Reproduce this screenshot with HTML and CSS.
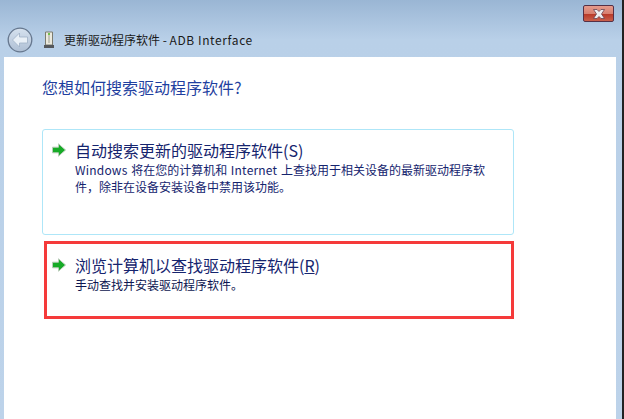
FILE: index.html
```html
<!DOCTYPE html>
<html lang="zh-CN">
<head>
    <meta charset="UTF-8">
    <title>更新驱动程序软件</title>
    <link rel="stylesheet" href="styles.css">
</head>
<body>
    <div class="window">
        <div class="caption">
            <div class="close-btn">
                <svg width="16" height="10" viewBox="0 0 16 10">
                    <path d="M2.5 .5 L6 .5 L8 2.5 L10 .5 L13.5 .5 L10.5 5 L13.5 9.5 L10 9.5 L8 7.5 L6 9.5 L2.5 9.5 L5.5 5 Z" fill="#eeeef0" stroke="#6a4450" stroke-width="0.8"/>
                </svg>
            </div>
        </div>
        <div class="nav">
            <div class="back-btn">
                <svg width="26" height="26" viewBox="0 0 26 26">
                    <defs>
                        <linearGradient id="back-fill" x1="0" y1="0" x2="0" y2="1">
                            <stop offset="0" stop-color="#d6e2ef"/>
                            <stop offset="1" stop-color="#aebfd4"/>
                        </linearGradient>
                    </defs>
                    <circle cx="13" cy="13" r="11.8" fill="url(#back-fill)" stroke="#66778e" stroke-width="1.3"/>
                    <path d="M12.5 6 L5.5 13 L12.5 20 L12.5 16 L20.5 16 L20.5 10 L12.5 10 Z" fill="#e9f0f7" stroke="#9fb1c6" stroke-width="0.8"/>
                </svg>
            </div>
            <svg class="device-icon" width="12" height="18" viewBox="0 0 12 18">
                <path d="M2.5 1 L9.5 1 L9.5 14 L2.5 14 Z" fill="#eceade" stroke="#7c7c70"/>
                <rect x="5" y="2" width="2" height="10" fill="#c4c4b8"/>
                <rect x="5" y="2" width="2" height="2" fill="#6fc04a"/>
                <rect x="1" y="14" width="10" height="3" fill="#55585c"/>
            </svg>
            <span class="nav-title">更新驱动程序软件 - <span class="latin">ADB Interface</span></span>
        </div>
        <main class="content">
            <h1 class="question">您想如何搜索驱动程序软件?</h1>
            <div class="choices">
                <div class="choice choice-hover">
                    <svg class="arrow" width="16" height="14" viewBox="0 0 16 14">
                        <path d="M1.5 4.2 L7.5 4.2 L7.5 .8 L14.5 7 L7.5 13.2 L7.5 9.8 L1.5 9.8 Z" fill="#17ab27" stroke="#b9ccb9" stroke-width="1"/>
                    </svg>
                    <div class="choice-text">
                        <div class="choice-title">自动搜索更新的驱动程序软件(S)</div>
                        <div class="choice-desc"><span class="latin">Windows</span> 将在您的计算机和 <span class="latin">Internet</span> 上查找用于相关设备的最新驱动程序软<br>件，除非在设备安装设备中禁用该功能。</div>
                    </div>
                </div>
                <div class="choice choice-marked">
                    <svg class="arrow" width="16" height="14" viewBox="0 0 16 14">
                        <path d="M1.5 4.2 L7.5 4.2 L7.5 .8 L14.5 7 L7.5 13.2 L7.5 9.8 L1.5 9.8 Z" fill="#17ab27" stroke="#b9ccb9" stroke-width="1"/>
                    </svg>
                    <div class="choice-text">
                        <div class="choice-title">浏览计算机以查找驱动程序软件(<u>R</u>)</div>
                        <div class="choice-desc choice-desc-strong">手动查找并安装驱动程序软件。</div>
                    </div>
                </div>
            </div>
        </main>
    </div>
</body>
</html>
```

FILE: styles.css
```css
html, body {
    margin: 0;
    height: 100%;
    overflow: hidden;
    font-family: "Noto Sans CJK SC", "Noto Sans", sans-serif;
}
.window {
    display: flex;
    flex-direction: column;
    box-sizing: border-box;
    height: 419px;
    padding-left: 4px;
    padding-right: 6px;
    background: linear-gradient(#9ab6d4 0, #b9d0e8 40px, #bdd3ea 100%);
    border-right: 2px solid;
    border-image: linear-gradient(90deg, #3fc4ee 50%, #222 50%) 1;
}
.caption {
    display: flex;
    justify-content: flex-end;
    height: 22px;
    padding-top: 5px;
    padding-right: 2px;
    box-sizing: border-box;
}
.close-btn {
    display: flex;
    align-items: center;
    justify-content: center;
    box-sizing: border-box;
    width: 31px;
    height: 17px;
    border: 1px solid #553046;
    border-radius: 2px;
    background: linear-gradient(#e59a8c 0, #d88070 50%, #b93a28 55%, #c9604c 100%);
}
.nav {
    display: flex;
    align-items: center;
    height: 35px;
    color: #1a1a1a;
}
.back-btn {
    display: flex;
    margin-left: 3px;
}
.device-icon {
    margin-left: 10px;
}
.nav-title {
    margin-left: 9px;
    font-size: 12px;
    white-space: nowrap;
}
.nav-title .latin {
    letter-spacing: 0.6px;
}
.content {
    flex: 1;
    background: #fff;
    padding: 18px 0 0 38px;
}
.question {
    margin: 0;
    font-size: 16px;
    font-weight: 400;
    line-height: 24px;
    color: #1f3fa0;
}
.choices {
    display: flex;
    flex-direction: column;
    gap: 6px;
    width: 472px;
    margin-top: 30px;
}
.choice {
    display: flex;
    box-sizing: border-box;
    padding-left: 8px;
}
.choice-hover {
    height: 106px;
    padding-top: 10px;
    border: 1px solid #aee6f8;
    border-radius: 3px;
}
.choice-marked {
    height: 78px;
    padding-top: 11px;
    border: 3px solid #f53a3a;
    width: 470px;
    margin-left: 2px;
    padding-left: 4px;
}
.arrow {
    flex: none;
    margin-top: 3px;
}
.choice-text {
    margin-left: 8px;
    color: #15246e;
}
.choice-title {
    font-size: 16px;
    line-height: 20px;
    white-space: nowrap;
}
.choice-desc {
    font-size: 12px;
    line-height: 17px;
    margin-top: 1px;
    white-space: nowrap;
    word-spacing: 1px;
}
.choice-desc .latin {
    letter-spacing: 0.2px;
}
.choice-desc-strong {
    color: #0c1550;
}
```
